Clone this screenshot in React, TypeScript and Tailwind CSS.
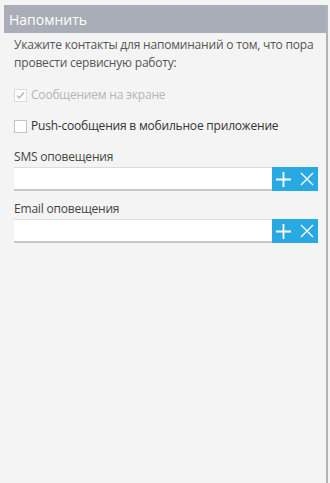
import React, { useState } from 'react';

const font = { fontFamily: '"Open Sans", "Liberation Sans", sans-serif' };

const ContactInput: React.FC<{ label: string; className?: string }> = ({ label, className }) => {
  const [value, setValue] = useState('');
  return (
    <div className={className}>
      <div className="text-[12px] leading-[18px] tracking-[-0.2px] text-[#444]">{label}</div>
      <div className="mt-[1px] flex h-[24px]">
        <input
          value={value}
          onChange={(e) => setValue(e.target.value)}
          className="h-full min-w-0 flex-1 border-t border-b-2 border-t-[#dcdcdc] border-b-[#c6c6cc] bg-white px-1 text-[13px] outline-none"
        />
        <div className="flex h-full w-[46px] items-center bg-[#29a9e1] text-white">
          <button className="flex h-full w-[23px] items-center justify-center">
            <svg width="15" height="15" viewBox="0 0 15 15" stroke="white" strokeWidth="1.8">
              <path d="M7.5 0v15M0 7.5h15" />
            </svg>
          </button>
          <button className="flex h-full w-[23px] items-center justify-center">
            <svg width="14" height="14" viewBox="0 0 14 14" stroke="white" strokeWidth="1.4">
              <path d="M1 1l12 12M13 1L1 13" />
            </svg>
          </button>
        </div>
      </div>
    </div>
  );
};

const Checkbox: React.FC<{ checked?: boolean; disabled?: boolean; label: string }> = ({ checked, disabled, label }) => (
  <label className={`flex items-center gap-[4px] text-[12px] leading-[18px] tracking-[-0.2px] ${disabled ? 'text-[#b4b4b4]' : 'text-[#333]'}`}>
    <span className={`flex h-[13px] w-[13px] items-center justify-center border bg-white ${disabled ? 'border-[#dcdcdc]' : 'border-[#c4c4c4]'}`}>
      {checked && (
        <svg width="9" height="9" viewBox="0 0 9 9" fill="none" stroke="#b4b4b4" strokeWidth="1.4">
          <path d="M1 4.5l2.3 2.5L8 1.5" />
        </svg>
      )}
    </span>
    {label}
  </label>
);

export default function App() {
  return (
    <div className="h-[483px] w-[330px] overflow-hidden bg-[#f4f4f4] pt-[5px] pl-[4px]" style={font}>
      <div className="h-[478px] w-[324px] border-r-2 border-[#b0b3bd]">
        <div className="flex h-[28px] items-center bg-[#a9adb7] pl-[5px] text-[14px] text-white">Напомнить</div>
        <div className="pt-[3px] pr-[8px] pl-[10px]">
          <p className="text-[12px] leading-[18px] tracking-[-0.2px] text-[#555]">
            Укажите контакты для напоминаний о том, что пора провести сервисную работу:
          </p>
          <div className="mt-[14px]">
            <Checkbox checked disabled label="Сообщением на экране" />
          </div>
          <div className="mt-[13px]">
            <Checkbox label="Push-сообщения в мобильное приложение" />
          </div>
          <ContactInput className="mt-[13px]" label="SMS оповещения" />
          <ContactInput className="mt-[9px]" label="Email оповещения" />
        </div>
      </div>
    </div>
  );
}
